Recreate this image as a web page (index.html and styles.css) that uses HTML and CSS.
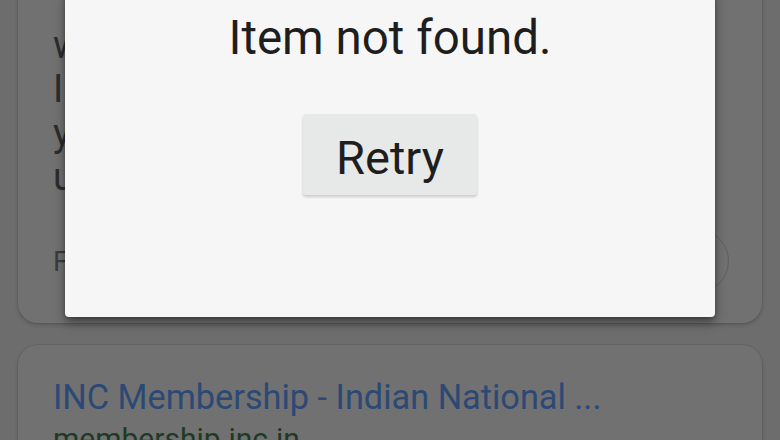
FILE: index.html
```html
<!DOCTYPE html>
<html>
<head>
<meta charset="utf-8">
<link rel="stylesheet" href="styles.css">
</head>
<body>
<div class="page">
  <div class="card card-top">
    <div class="snippet">
      <div class="line">welcome to the membership portal</div>
      <div class="line">Indian National Congress. Please</div>
      <div class="line">your details to become a member</div>
      <div class="line">updated with the party.</div>
    </div>
    <div class="footer-row">
      <span class="footer-text">From membership.inc.in</span>
      <span class="round-btn"></span>
    </div>
  </div>
  <div class="card card-bottom">
    <div class="result-title">INC Membership - Indian National ...</div>
    <div class="result-url">membership.inc.in</div>
  </div>
</div>

<div class="dialog">
  <div class="dialog-title">Item not found.</div>
  <button class="retry">Retry</button>
</div>
</body>
</html>
```

FILE: styles.css
```css
html, body {
  margin: 0;
  padding: 0;
}

body {
  width: 780px;
  height: 440px;
  overflow: hidden;
  background: #6d6d6d;
  font-family: Roboto, "Noto Sans", "Liberation Sans", sans-serif;
  position: relative;
}

.page {
  display: flex;
  flex-direction: column;
  gap: 22px;
  padding: 0 18px;
  height: 440px;
  overflow: hidden;
}

.card {
  background: #717171;
  border-radius: 20px;
  box-shadow: 0 2px 4px rgba(0, 0, 0, 0.18), 0 0 0 1px rgba(0, 0, 0, 0.05);
  overflow: hidden;
  padding-left: 35px;
  padding-right: 35px;
  flex-shrink: 0;
}

.card-top {
  margin-top: -40px;
  height: 363px;
  box-sizing: border-box;
  padding-top: 63px;
  display: flex;
  flex-direction: column;
}

.snippet {
  color: #2c2c2c;
  font-size: 38px;
  line-height: 44px;
  white-space: nowrap;
}

.footer-row {
  margin-top: 30px;
  display: flex;
  align-items: center;
  justify-content: space-between;
}

.footer-text {
  color: #3c3c3c;
  font-size: 28px;
}

.round-btn {
  width: 64px;
  height: 64px;
  border-radius: 50%;
  border: 1px solid #5f5f5f;
  box-sizing: border-box;
  margin-right: -2px;
}

.card-bottom {
  height: 140px;
  padding-top: 30px;
  box-sizing: border-box;
}

.result-title {
  color: #2c4975;
  font-size: 34.3px;
  line-height: 44px;
  white-space: nowrap;
}

.result-url {
  color: #1f3a24;
  font-size: 30px;
  line-height: 34px;
  margin-top: 3px;
  white-space: nowrap;
}

.dialog {
  position: absolute;
  left: 65px;
  top: -10px;
  width: 650px;
  height: 327px;
  background: #f6f6f6;
  border-radius: 4px;
  box-shadow: 0 6px 12px rgba(0, 0, 0, 0.35), 0 2px 4px rgba(0, 0, 0, 0.25);
  display: flex;
  flex-direction: column;
  align-items: center;
}

.dialog-title {
  margin-top: 25px;
  font-size: 47.5px;
  line-height: 47px;
  color: #1e1e1e;
}

.retry {
  margin-top: 52px;
  width: 174px;
  height: 81px;
  border: none;
  border-radius: 3px;
  background: #e7e8e8;
  color: #1e1e1e;
  font-family: Roboto, "Noto Sans", "Liberation Sans", sans-serif;
  font-size: 47px;
  line-height: 47px;
  padding: 6px 0 0 0;
  box-shadow: 0 2px 3px rgba(0, 0, 0, 0.18);
}
```
